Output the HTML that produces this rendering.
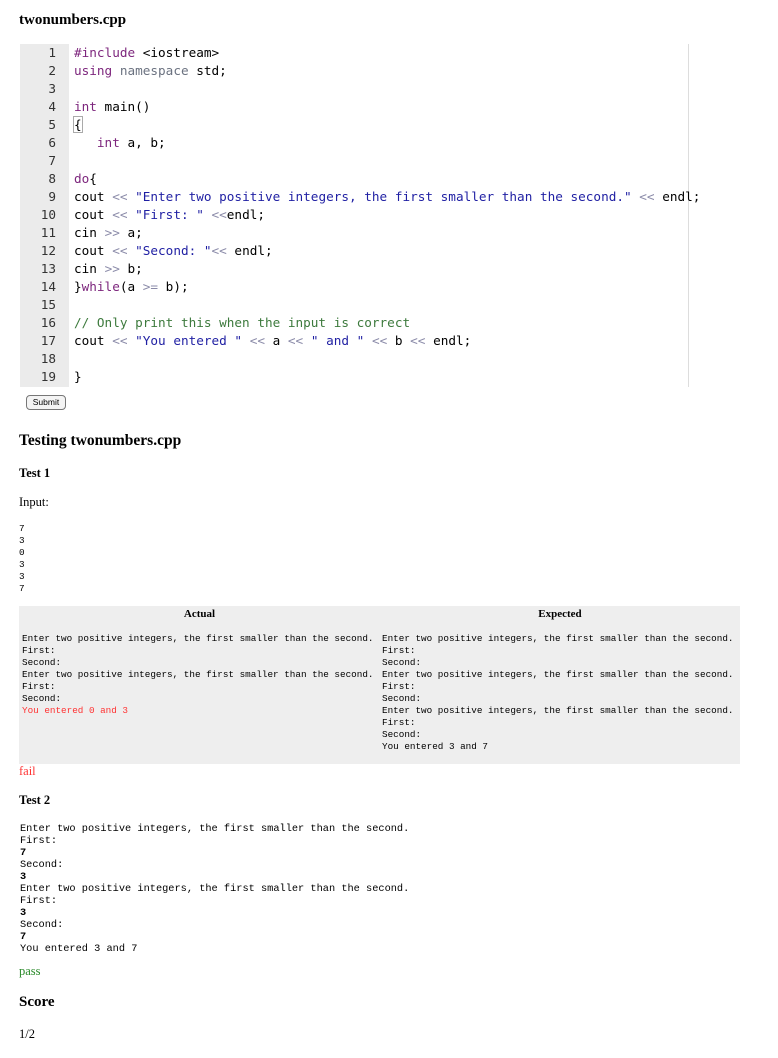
<!DOCTYPE html>
<html><head><meta charset="utf-8">
<style>
body{margin:0;width:778px;height:1058px;background:#fff;position:relative;font-family:"Liberation Serif",serif;color:#000;overflow:hidden}
.a{position:absolute}
h{position:absolute;font-weight:bold}
.gut{left:20px;top:44px;width:49px;height:343px;background:#ebebeb}
.code{left:20px;top:44px;font-family:"DejaVu Sans Mono",monospace;font-size:12.7px;line-height:18px;white-space:pre;color:#000}
.ln{display:inline-block;width:36px;text-align:right;margin-right:18px;color:#333}
.k{color:#7d267d}.s{color:#1f1fa3}.c{color:#3d7a3d}.o{color:#8a8aa8}.n{color:#6b7280}
.m{font-family:"Liberation Mono",monospace;font-size:9.3px;line-height:12px;white-space:pre}
.m2{font-family:"Liberation Mono",monospace;font-size:10.3px;line-height:12px;white-space:pre}
</style></head><body>
<h style="left:19px;top:12px;font-size:15px">twonumbers.cpp</h>
<div class="a gut"></div>
<div class="a" style="left:688px;top:44px;width:1px;height:343px;background:#ddd"></div>
<div class="a code"><span class="ln">1</span><span class="k">#include</span> &lt;iostream&gt;
<span class="ln">2</span><span class="k">using</span> <span class="n">namespace</span> std;
<span class="ln">3</span>
<span class="ln">4</span><span class="k">int</span> main()
<span class="ln">5</span><span style="outline:1px solid #aaa">{</span>
<span class="ln">6</span>   <span class="k">int</span> a, b;
<span class="ln">7</span>
<span class="ln">8</span><span class="k">do</span>{
<span class="ln">9</span>cout <span class="o">&lt;&lt;</span> <span class="s">"Enter two positive integers, the first smaller than the second."</span> <span class="o">&lt;&lt;</span> endl;
<span class="ln">10</span>cout <span class="o">&lt;&lt;</span> <span class="s">"First: "</span> <span class="o">&lt;&lt;</span>endl;
<span class="ln">11</span>cin <span class="o">&gt;&gt;</span> a;
<span class="ln">12</span>cout <span class="o">&lt;&lt;</span> <span class="s">"Second: "</span><span class="o">&lt;&lt;</span> endl;
<span class="ln">13</span>cin <span class="o">&gt;&gt;</span> b;
<span class="ln">14</span>}<span class="k">while</span>(a <span class="o">&gt;=</span> b);
<span class="ln">15</span>
<span class="ln">16</span><span class="c">// Only print this when the input is correct</span>
<span class="ln">17</span>cout <span class="o">&lt;&lt;</span> <span class="s">"You entered "</span> <span class="o">&lt;&lt;</span> a <span class="o">&lt;&lt;</span> <span class="s">" and "</span> <span class="o">&lt;&lt;</span> b <span class="o">&lt;&lt;</span> endl;
<span class="ln">18</span>
<span class="ln">19</span>}</div>
<div class="a" style="left:26px;top:395px;width:38px;height:13px;border:1.5px solid #777;border-radius:4px;background:#f4f4f4;font-family:'Liberation Sans',sans-serif;font-size:8.5px;line-height:13px;text-align:center">Submit</div>
<h style="left:19px;top:432px;font-size:15.5px">Testing twonumbers.cpp</h>
<h style="left:19px;top:466px;font-size:12.5px">Test 1</h>
<div class="a" style="left:19px;top:495px;font-size:12.5px">Input:</div>
<div class="a m" style="left:19px;top:523px;line-height:12px">7
3
0
3
3
7</div>
<div class="a" style="left:19px;top:606px;width:721px;height:158px;background:#eeeeee"></div>
<h style="left:19px;top:608px;width:361px;text-align:center;font-size:11px">Actual</h>
<h style="left:380px;top:608px;width:360px;text-align:center;font-size:11px">Expected</h>
<div class="a m" style="left:22px;top:633px">Enter two positive integers, the first smaller than the second.
First:
Second:
Enter two positive integers, the first smaller than the second.
First:
Second:
<span style="color:#f33">You entered 0 and 3</span></div>
<div class="a m" style="left:382px;top:633px">Enter two positive integers, the first smaller than the second.
First:
Second:
Enter two positive integers, the first smaller than the second.
First:
Second:
Enter two positive integers, the first smaller than the second.
First:
Second:
You entered 3 and 7</div>
<div class="a" style="left:19px;top:764px;font-size:12.5px;color:#f33">fail</div>
<h style="left:19px;top:793px;font-size:12.5px">Test 2</h>
<div class="a m2" style="left:20px;top:823px">Enter two positive integers, the first smaller than the second.
First:
<b>7</b>
Second:
<b>3</b>
Enter two positive integers, the first smaller than the second.
First:
<b>3</b>
Second:
<b>7</b>
You entered 3 and 7</div>
<div class="a" style="left:19px;top:964px;font-size:12.5px;color:#2a8a2a">pass</div>
<h style="left:19px;top:994px;font-size:15px">Score</h>
<div class="a" style="left:19px;top:1027px;font-size:12.5px">1/2</div>
</body></html>
